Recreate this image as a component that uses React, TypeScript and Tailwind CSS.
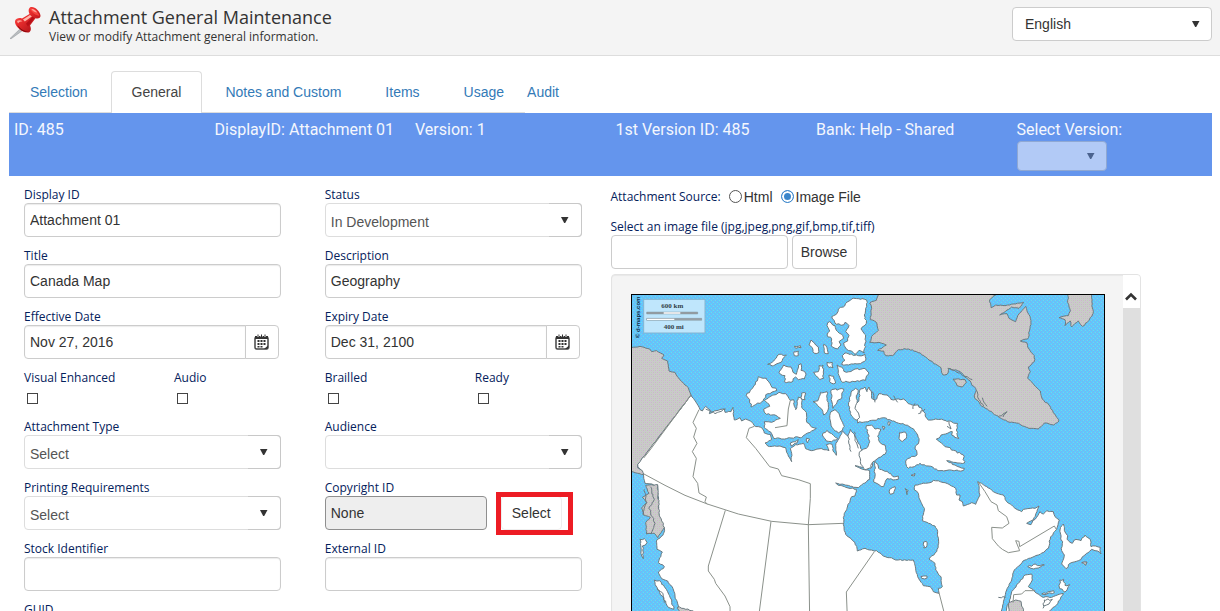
import { useId, type ReactNode } from "react";

/* ---------- Map drawing ---------- */

type Pt = [number, number];

function parse(src: string): Pt[] {
  return src.trim().split(/\s+/).map((p) => p.split(",").map(Number) as Pt);
}

/* Builds a path with small repeatable irregularities, so that coasts look rugged. */
function coast(src: string, dx: number, dy: number, rough = 4, close = true): string {
  const pts = parse(src);
  let seed = Math.round(Math.abs(pts[0][0] * 31 + pts[0][1] * 17)) + 7;
  const rand = () => {
    seed = (seed * 1103515245 + 12345) % 2147483648;
    return seed / 2147483648 - 0.5;
  };
  const out: string[] = [];
  const count = close ? pts.length : pts.length - 1;
  for (let i = 0; i < count; i++) {
    const a = pts[i];
    const b = pts[(i + 1) % pts.length];
    const len = Math.hypot(b[0] - a[0], b[1] - a[1]);
    const steps = Math.max(1, Math.min(24, Math.floor(len / 6)));
    for (let s = 0; s < steps; s++) {
      const t = s / steps;
      const k = s === 0 ? 0 : rough;
      const x = a[0] + (b[0] - a[0]) * t + rand() * k * 1.8 + dx;
      const y = a[1] + (b[1] - a[1]) * t + rand() * k * 1.8 + dy;
      out.push(`${x.toFixed(1)},${y.toFixed(1)}`);
    }
  }
  if (!close) {
    const e = pts[pts.length - 1];
    out.push(`${e[0] + dx},${e[1] + dy}`);
  }
  return `M${out.join("L")}${close ? "Z" : ""}`;
}

/* Each sheet of the map has its own origin. */
const NW: Pt = [-18, -27];
const NE: Pt = [702, -87];
const SW: Pt = [-18, 456];
const SE: Pt = [702, 438];

const shift = (src: string, [dx, dy]: Pt) =>
  parse(src).map(([x, y]) => `${x + dx},${y + dy}`).join(" ");

const MAINLAND = [
  shift("198,330 215,355 225,374 232,378 242,364 256,376 253,386 268,378 298,372 300,382 318,380 324,367 328,405 345,398 350,408 362,402 376,408 388,422 412,430 418,444 436,448 440,464 420,474 428,483 455,484", NW),
  shift("465,0 482,5 490,30 500,47 500,22 496,8 512,-4 536,-8 542,8 560,14 590,8 612,14 604,-4 620,-6 626,18 634,28 632,-2 645,-30 652,-46 668,-30 676,-50 690,-30 698,-12 712,12 724,18 732,2 740,12 742,34 730,38 744,42 740,64 712,64 690,59 708,68 734,74 734,100 700,125 632,111 640,118 694,130 690,150 680,152 668,180 655,215 655,235 662,265 690,290 697,315 720,307 748,315", SW),
  shift("35,332 55,348 100,360 145,360 158,410 175,437 195,440 205,455 222,460 220,445 232,440 228,410 212,390 210,370 192,357 215,335 221,310 218,275 210,258 172,242 178,205 165,180 160,160 148,150 150,135 195,128 205,121 240,128 265,140 272,145 275,165 285,165 282,180 292,185 295,198 320,188 332,193 345,165 338,125 350,130 365,140 385,155 395,160 415,165 425,185 440,195 450,205 470,215 475,208 510,205 522,198 504,240 485,250 498,254 525,215 535,222 545,212 565,215 570,230 583,240 575,268 557,290 550,325 520,345 480,360 448,390 440,420 425,450 415,490 400,540 418,535 440,455 480,405 500,402 502,420 490,440 510,456 530,470 560,472 595,460 575,495 530,530 530,700 -650,700", SE),
  shift("168,510 150,450 144,428 128,405 110,398 100,378 118,362 100,350 112,318 96,310 94,285 116,262 118,245 102,225 98,118 60,112 55,84 38,62 38,55", SW),
].join(" ");

const ALASKA = [
  shift("0,190 18,188 45,184 74,192 80,200 95,197 117,210 110,220 128,228 132,258 150,262 160,278 180,300 190,308 198,330", NW),
  shift("38,55 38,65 52,74 56,86 18,76 0,70", SW),
].join(" ");

const WHITE_ISLANDS: [string, Pt][] = [
  ["725,45 700,41 680,42 662,55 655,66 640,72 634,88 620,95 630,114 648,121 660,112 672,122 662,140 672,152 668,168 656,174 664,192 680,198 690,208 702,196 718,204 722,150 708,132 724,115 718,90 722,70", NW],
  ["614,110 606,122 614,138 606,150 620,162 622,186 638,192 648,180 642,170 656,160 650,148 638,140 630,122", NW],
  ["652,212 660,204 700,212 720,208 722,226 706,236 690,236 670,240 650,238 660,226", NW],
  ["636,240 650,246 664,262 690,252 722,252 732,264 722,286 690,290 652,292 642,272", NW],
  ["558,165 552,180 562,188 568,205 582,202 580,186 572,180", NW],
  ["596,178 598,204 610,206 606,188", NW],
  ["606,232 622,232 624,248 612,248", NW],
  ["612,270 626,274 632,294 618,294", NW],
  ["428,238 446,228 462,208 484,210 472,226 456,236 446,242", NW],
  ["508,200 520,198 520,212 508,212", NW],
  ["508,184 526,182 528,188 512,190", NW],
  ["462,262 476,240 498,246 504,262 514,268 520,240 528,236 528,256 542,264 538,282 520,284 512,276 498,292 478,290 480,272", NW],
  ["566,262 580,260 582,242 594,240 596,280 584,284 572,272", NW],
  ["400,275 424,280 438,302 456,316 428,326 410,350 378,366 374,344 364,332 384,308", NW],
  ["418,346 446,330 462,322 482,326 496,346 506,344 512,374 520,336 530,340 530,366 544,382 544,404 560,426 574,430 548,444 530,458 510,456 470,462 446,460 438,442 418,428 418,410 440,412 466,400 450,390 424,388 416,372 434,364", NW],
  ["530,324 542,324 540,344 528,338", NW],
  ["564,350 578,348 586,322 606,320 606,346 610,372 596,390 590,372 578,362", NW],
  ["620,314 656,312 650,340 636,352 624,370 618,344", NW],
  ["618,380 630,374 642,386 658,424 652,436 640,444 622,428 616,406", NW],
  ["606,436 620,446 638,460 620,470 604,468 592,450", NW],
  ["496,474 520,464 516,474 498,482", NW],
  ["544,460 554,462 548,474", NW],
  ["680,318 692,310 700,316 694,340 700,360 700,382 714,390 716,398 690,404 676,386 670,360", NW],
  ["-14,372 0,366 6,380 12,366 20,384 20,400 30,406 42,386 66,390 85,405 96,402 120,405 130,416 160,420 176,440 190,465 212,462 235,465 278,475 274,495 282,520 260,510 262,500 236,508 214,522 240,545 266,556 295,570 298,594 245,587 270,600 298,610 296,616 225,617 165,595 148,605 130,610 122,588 140,574 156,570 150,552 162,528 158,510 146,492 120,480 82,468 56,458 20,466 -22,474 -18,450 -30,430 -18,404", NE],
  ["4,482 20,480 30,492 48,494 38,514 44,532 60,540 64,560 48,576 24,590 18,610 0,614 -14,590 -16,560 4,550 14,530", NE],
  ["104,502 122,502 124,520 112,530 102,520", NE],
  ["52,484 60,486 56,494", NE],
  ["70,470 76,472 72,482", NE],
  ["30,64 44,88 66,94 84,110 100,108 100,118 84,120 66,116 56,140 42,134 26,126 30,100", SE],
  ["74,148 90,140 86,160 76,163", SE],
  ["120,146 130,152 126,164", SE],
  ["138,106 150,100 148,108", SE],
  ["176,306 184,304 184,322 176,324", SE],
  ["168,410 186,408 186,414 170,415", SE],
  ["595,252 585,270 592,310 590,332 598,345 590,372 603,386 615,370 640,362 660,345 680,328 690,332 708,342 706,322 692,318 678,320 676,298 660,285 648,302 628,300 622,310 610,302 604,282", SE],
  ["488,380 505,374 538,375 520,384 498,385", SE],
  ["584,420 596,418 600,436 614,434 600,456 584,446", SE],
  ["530,462 566,452 568,458 540,464", SE],
  ["45,280 58,278 66,290 52,300 55,338 48,318", SW],
  ["88,402 104,404 124,430 140,462 146,490 130,484 112,450 98,430", SW],
];

const GREY_LANDS: [string, Pt][] = [
  ["40,86 370,86 392,90 374,104 378,128 392,120 420,122 476,112 462,130 440,126 404,150 426,146 432,160 452,170 462,146 482,124 496,160 498,178 488,222 466,228 486,234 488,246 508,272 508,290 490,306 496,320 488,340 504,356 526,378 532,402 552,420 582,468 566,480 538,474 520,492 492,490 454,474 428,470 404,458 380,440 350,424 328,396 334,376 310,344 286,320 252,310 246,328 234,330 228,308 198,288 166,264 130,252 100,254 82,272 62,272 56,258 38,256 64,240 42,232 14,232 20,214 40,196 34,172 16,164 20,130 14,114 34,106", NE],
  ["610,86 678,86 684,146 672,166 652,184 640,168 620,186 616,168 600,182 600,164 582,158 610,152 616,138 608,112", NE],
  ["264,342 300,344 304,352 292,366 276,362", NE],
  ["62,118 98,116 102,200 118,245 98,275 88,262 64,264 62,230 76,214 54,206 50,186 66,170 52,154 72,142", SW],
  ["434,540 430,490 452,480 468,484 482,540", SE],
  ["158,483 205,495 205,540 178,540", SW],
  ["650,368 666,366 662,376", SE],
];

const BORDERS = [
  `M${shift("198,330 75,495 56,519", NW)}`,
  `M${shift("222,374 204,412 214,430 206,456 216,475 202,500 214,520 204,575 218,595 222,624 244,636 240,650 247,658", NW)}`,
  `M${shift("388,424 372,430 364,458 392,490 434,545 460,552 470,572 520,584 556,596 556,640 550,720 554,1000", NW)}`,
  `M${shift("496,346 490,372 486,422 450,428", NW)}`,
  `M${shift("57,84 120,118 180,148 247,174 340,204 440,226 550,236 655,232", SW)}`,
  `M${shift("301,193 250,360 250,375 268,400 272,412 300,450 315,482 316,540", SW)}`,
  `M${shift("438,226 400,520", SW)}`,
  `M${shift("748,317 664,438 668,540", SW)}`,
  `M${shift("222,458 238,520", SE)}`,
  `M${shift("340,126 360,155 378,185 396,195 400,212 425,230 432,250 412,264 380,262 382,296 400,318 412,328 430,338 464,332 452,302 462,304 464,320 568,258 575,270", SE)}`,
  `M${shift("510,452 480,452 470,462 446,464 444,488", SE)}`,
];

const FJORDS: [string, Pt][] = [
  ["242,372 270,386 302,372", NW],
  ["668,450 674,480 678,500", NW],
  ["688,440 692,470 700,490", NW],
  ["334,376 342,404 356,424", NE],
  ["352,398 366,424", NE],
  ["400,456 426,440 414,456", NE],
  ["22,380 30,412", NE],
  ["86,392 98,412", NE],
  ["150,415 144,432", NE],
  ["180,432 160,446", NE],
  ["252,470 258,492 246,484", NE],
  ["248,310 268,316 300,334 322,344", NE],
  ["400,472 422,472", SE],
  ["76,122 88,160 72,188 90,232 78,262", SW],
  ["58,130 64,170 56,206", SW],
  ["96,430 112,440 118,470", SW],
  ["534,505 538,480 562,478 552,492 536,498", SE],
];

function CanadaMap() {
  return (
    <svg viewBox="3 3 1416 1284" className="block w-full bg-[#66c8fa]" role="img" aria-label="Map of Canada">
      <defs>
        <pattern id="sea" width="12" height="12" patternUnits="userSpaceOnUse">
          <rect width="12" height="12" fill="#5ccaff" />
          <path d="M0 0h3v3H0zM6 3h3v3H6zM3 6h3v3H3zM9 9h3v3H9z" fill="#80b2ea" />
          <path d="M6 0h3v3H6zM0 6h3v3H0z" fill="#6cdaee" />
        </pattern>
        <pattern id="ground" width="12" height="12" patternUnits="userSpaceOnUse">
          <rect width="12" height="12" fill="#cacaca" />
          <path d="M0 0h3v3H0zM6 6h3v3H6z" fill="#ccb4cc" />
          <path d="M6 0h3v3H6zM0 6h3v3H0z" fill="#c0ccb8" />
        </pattern>
      </defs>
      <rect width="1422" height="1290" fill="url(#sea)" />
      <g stroke="#6b7a80" strokeWidth="3" strokeLinejoin="round" fill="none">
        <path d={coast(MAINLAND, 0, 0, 2)} fill="#fff" />
        <path d={coast(ALASKA, 0, 0, 1)} fill="url(#ground)" />
        {WHITE_ISLANDS.map(([p, o], i) => (
          <path key={i} d={coast(p, o[0], o[1], 3)} fill="#fff" />
        ))}
        {GREY_LANDS.map(([p, o], i) => (
          <path key={i} d={coast(p, o[0], o[1], 2)} fill="url(#ground)" />
        ))}
        {FJORDS.map(([p, o], i) => (
          <path key={i} d={coast(p, o[0], o[1], 3, false)} />
        ))}
      </g>
      <g stroke="#8b918b" strokeWidth="3" fill="none">
        {BORDERS.map((d, i) => (
          <path key={i} d={d} />
        ))}
      </g>
      <rect x="38" y="16" width="184" height="101" fill="#bfe6fc" stroke="#82b4d2" strokeWidth="3" />
      <path d="M47 54h153v6H47zM47 73h165v6H47z" fill="#9aa2a8" stroke="#6b7a80" strokeWidth="1" />
      <path d="M98 55h50v4H98zM48 74h82v4H48z" fill="#fff" />
      <g fill="#333f48" fontFamily="Liberation Serif, serif" fontWeight="700" fontSize="21">
        <text x="91" y="43">600 km</text>
        <text x="98" y="105">400 mi</text>
      </g>
      <text transform="translate(27 132) rotate(-90)" fill="#12304a" fontFamily="Liberation Sans, sans-serif" fontWeight="700" fontSize="18">
        © d-maps.com
      </text>
    </svg>
  );
}

/* ---------- Icons ---------- */

function PushPin() {
  return (
    <svg width="34" height="34" viewBox="0 0 34 34" aria-hidden="true" className="shrink-0">
      <defs>
        <linearGradient id="pinRed" x1="0" y1="0" x2="1" y2="1">
          <stop offset="0" stopColor="#ff8d80" />
          <stop offset="0.35" stopColor="#ee3030" />
          <stop offset="1" stopColor="#9c0810" />
        </linearGradient>
      </defs>
      <path d="M12.5 21.5 1 32.5l1.2.2L15 23.5z" fill="#b9bdc0" stroke="#8e9396" strokeWidth=".5" />
      <path d="M6 15c1-3 4.500-3.500 7-2.500L20.500 8C19 5 19.500 1.500 22 1c3.500-.8 9 4 9.500 8.500.2 2.500-2 3.500-5 2.800L21 19.500c1.500 3 1 6.500-1.500 7C14 27.500 5 20 6 15z" fill="url(#pinRed)" />
      <path d="M21 2.500c2-1.500 8 2.500 9.200 7.200-3-.2-8-3.200-9.200-7.200z" fill="#f6443f" />
      <path d="M22.500 3.200c1.500-.6 4.500 1.300 5.800 3.300-2.300-.3-4.800-1.500-5.800-3.300z" fill="#ff9e94" />
      <path d="M14 13.500l7-4.500 1.800 1.500-7 5z" fill="#ffb8ae" />
      <path d="M8 15c2-1.500 4-.8 5.500.3-2 0-3.500.8-4.500 2.200z" fill="#ffa79c" />
      <path d="M19 20.500l6.500-8.500-2-1.200-6.500 7z" fill="#b80f17" />
      <path d="M8.500 19c3 4.500 7.500 6.500 11 6.300-4 1.700-9.500-1.500-11-6.300z" fill="#7e0409" />
    </svg>
  );
}

function CalendarIcon() {
  return (
    <svg width="16" height="16" viewBox="0 0 16 16" aria-hidden="true">
      <rect x="1" y="3" width="13" height="12" rx="1.500" fill="#fff" stroke="#444" strokeWidth="1.500" />
      <path d="M1 2h13v3H1z" fill="#333" />
      <path d="M4 0v3M7.500 0v3M11 0v3" stroke="#fff" strokeWidth="2" />
      <path d="M4 .5v2.500M7.500 .5v2.500M11 .5v2.500" stroke="#333" />
      <path d="M6.500 6h2v2h-2zM9.500 6h2v2h-2zM3.500 6h2v2h-2zM6.500 9h2v2h-2zM9.500 9h2v2h-2zM3.500 9h2v2h-2zM6.500 12h2v1.500h-2zM3.500 12h2v1.500h-2z" fill="#333" />
      <path d="M14 11.500v2l-1.500 1.500H10z" fill="#333" />
    </svg>
  );
}

function Triangle({ className = "" }: { className?: string }) {
  return (
    <svg width="8" height="6" viewBox="0 0 8 6" aria-hidden="true" className={className}>
      <path d="M0 0h7.500L4.200 6h-1z" fill="#333" />
    </svg>
  );
}

/* ---------- Form parts ---------- */

const LABEL = "block h-[17px] text-xs leading-[17px] whitespace-nowrap text-[#04215c] font-['Open_Sans',sans-serif]";
const BOX_BASE = "h-[34px] rounded border px-[5px] text-sm text-[#333] outline-none";
const BOX = `${BOX_BASE} border-[#ccc] bg-white`;
const INSET = "shadow-[inset_0_1px_1px_rgba(0,0,0,0.08)]";

function Field({ label, children }: { label: string; children: (id: string) => ReactNode }) {
  const id = useId();
  return (
    <div className="w-[257px]">
      <label htmlFor={id} className={LABEL}>{label}</label>
      {children(id)}
    </div>
  );
}

function TextField({ label, value = "" }: { label: string; value?: string }) {
  return (
    <Field label={label}>
      {(id) => <input id={id} type="text" defaultValue={value} className={`${BOX} ${INSET} block w-full`} />}
    </Field>
  );
}

function DateField({ label, value }: { label: string; value: string }) {
  return (
    <Field label={label}>
      {(id) => (
        <div className="flex">
          <input id={id} type="text" defaultValue={value} className={`${BOX} ${INSET} w-[222px] rounded-r-none`} />
          <button type="button" aria-label={`Choose ${label}`} className="-ml-px flex h-[34px] w-[34px] items-center justify-center rounded-r border border-[#ccc] bg-white">
            <CalendarIcon />
          </button>
        </div>
      )}
    </Field>
  );
}

function SelectField({ label, value = "" }: { label: string; value?: string }) {
  return (
    <Field label={label}>
      {(id) => (
        <div className="relative">
          <select id={id} className="block h-[34px] w-full appearance-none rounded border border-[#ddd] bg-white px-[5px] pt-[3px] text-sm text-[#555] outline-none">
            <option>{value}</option>
          </select>
          <span className="pointer-events-none absolute inset-y-0 right-0 flex w-[33px] justify-center rounded-r border border-l-0 border-[#c8c8c8] pt-[13px]">
            <Triangle />
          </span>
        </div>
      )}
    </Field>
  );
}

function CheckField({ label }: { label: string }) {
  const id = useId();
  return (
    <div className="h-[39px] w-[150px] shrink-0">
      <label htmlFor={id} className={LABEL}>{label}</label>
      <input id={id} type="checkbox" className="mt-[7px] ml-[3px] block size-[11px] appearance-none border border-[#444] bg-white" />
    </div>
  );
}

function Radio({ label, checked = false }: { label: string; checked?: boolean }) {
  return (
    <label className="flex items-center gap-[2px] text-sm text-[#333]">
      <input
        type="radio"
        name="source"
        defaultChecked={checked}
        className="size-[13px] appearance-none rounded-full border border-[#555] bg-white checked:border-[#3b86cb] checked:bg-[#3b86cb] checked:shadow-[inset_0_0_0_2px_#fff]"
      />
      {label}
    </label>
  );
}

const TABS = ["Selection", "General", "Notes and Custom", "Items", "Usage"];
const FACTS = ["ID: 485", "DisplayID: Attachment 01", "Version: 1", "1st Version ID: 485", "Bank: Help - Shared"];

export default function App() {
  return (
    <div className="h-screen overflow-hidden bg-white font-['Liberation_Sans',Arial,sans-serif] text-[#333]">
      <header className="flex h-14 items-start justify-between border-b border-[#ddd] bg-[#f4f4f4] pr-2 pl-[9px]">
        <div className="flex gap-[6px] pt-[6px] font-['Open_Sans',sans-serif]">
          <PushPin />
          <div>
            <h1 className="text-lg leading-[23px]">Attachment General Maintenance</h1>
            <p className="text-xs leading-4">View or modify Attachment general information.</p>
          </div>
        </div>
        <div className="relative mt-[7px] w-[200px]">
          <select aria-label="Language" className="block h-[34px] w-full appearance-none rounded border border-[#ccc] bg-white px-3 text-sm text-[#333] outline-none">
            <option>English</option>
          </select>
          <Triangle className="pointer-events-none absolute top-[14px] right-3" />
        </div>
      </header>

      <main className="mr-2 ml-[9px] pt-[15px]">
        <nav className="flex gap-[2px] text-sm leading-5">
          <div className="flex h-[42px] gap-[2px] border-b border-[#ddd]">
            {TABS.map((t) => (
              <a
                key={t}
                href={`#${t}`}
                className={
                  t === "General"
                    ? "h-[42px] rounded-t border border-b-0 border-[#ddd] bg-white px-5 py-[10px] text-[#444]"
                    : "h-[41px] px-[21px] py-[11px] text-[#337ab7]"
                }
              >
                {t}
              </a>
            ))}
          </div>
          <a href="#Audit" className="py-[11px] text-[#337ab7]">Audit</a>
        </nav>

        <section className="grid h-[63px] grid-cols-6 bg-[#6495ed] pt-[6px] font-[Roboto,sans-serif] text-base leading-[22px] font-normal text-[#f4f7fd]">
          {FACTS.map((f) => (
            <div key={f} className="pl-[5px] whitespace-nowrap">{f}</div>
          ))}
          <div className="pl-[5px]">
            <label htmlFor="version" className="block">Select Version:</label>
            <div className="relative w-[90px] opacity-50">
              <select id="version" disabled className="block h-[30px] w-full appearance-none rounded border border-[#bbb] bg-white opacity-100">
                <option></option>
              </select>
              <Triangle className="pointer-events-none absolute top-3 right-3" />
            </div>
          </div>
        </section>

        <div className="grid grid-cols-4 items-start pt-[10px]">
          <form className="col-span-2 grid grid-cols-2 content-start gap-y-[10px] *:ml-[15px]">
            <TextField label="Display ID" value="Attachment 01" />
            <SelectField label="Status" value="In Development" />
            <TextField label="Title" value="Canada Map" />
            <TextField label="Description" value="Geography" />
            <DateField label="Effective Date" value="Nov 27, 2016" />
            <DateField label="Expiry Date" value="Dec 31, 2100" />
            <div className="flex">
              <CheckField label="Visual Enhanced" />
              <CheckField label="Audio" />
            </div>
            <div className="flex">
              <CheckField label="Brailled" />
              <CheckField label="Ready" />
            </div>
            <SelectField label="Attachment Type" value="Select" />
            <SelectField label="Audience" />
            <SelectField label="Printing Requirements" value="Select" />
            <Field label="Copyright ID">
              {(id) => (
                <div className="flex gap-[14px]">
                  <input id={id} type="text" readOnly value="None" className={`${BOX_BASE} w-[162px] border-[#8f8f8f] bg-[#eee]`} />
                  <div className="relative">
                    <button type="button" className="h-[34px] w-[61px] rounded border border-[#eee] bg-white text-sm text-[#333]">
                      Select
                    </button>
                    <span className="pointer-events-none absolute -top-1 -left-[5px] h-[43px] w-[77px] border-5 border-[#ed1c24]" />
                  </div>
                </div>
              )}
            </Field>
            <TextField label="Stock Identifier" />
            <TextField label="External ID" />
            <TextField label="GUID" />
          </form>

          <section className="col-span-2">
            <div className="flex h-[21px] items-center">
              <span className={`${LABEL} mr-2`}>Attachment Source:</span>
              <div className="flex gap-2">
                <Radio label="Html" />
                <Radio label="Image File" checked />
              </div>
            </div>
            <label htmlFor="file" className={`${LABEL} mt-[11px]`}>
              Select an image file (jpg,jpeg,png,gif,bmp,tif,tiff)
            </label>
            <div className="flex gap-1">
              <input id="file" type="text" className={`${BOX} w-[177px]`} />
              <button type="button" className={`${BOX} w-[65px]`}>Browse</button>
            </div>
            <div className="mt-[5px] flex h-[470px] w-[530px] overflow-hidden rounded border border-[#e3e3e3] bg-[#f4f4f4] shadow-[inset_0_1px_1px_rgba(0,0,0,0.05)]">
              <div className="flex-1 py-[19px] pr-[18px] pl-[19px]">
                <div className="border border-black">
                  <CanadaMap />
                </div>
              </div>
              <div className="w-[17px] bg-[#dfdfdf]">
                <button type="button" aria-label="Scroll up" className="flex h-[33px] w-full items-center justify-center bg-white pt-[9px]">
                  <svg width="12" height="9" viewBox="0 0 12 9" aria-hidden="true">
                    <path d="M1 7.500l5-5 5 5" fill="none" stroke="#333" strokeWidth="2.600" />
                  </svg>
                </button>
              </div>
            </div>
          </section>
        </div>
      </main>
    </div>
  );
}
